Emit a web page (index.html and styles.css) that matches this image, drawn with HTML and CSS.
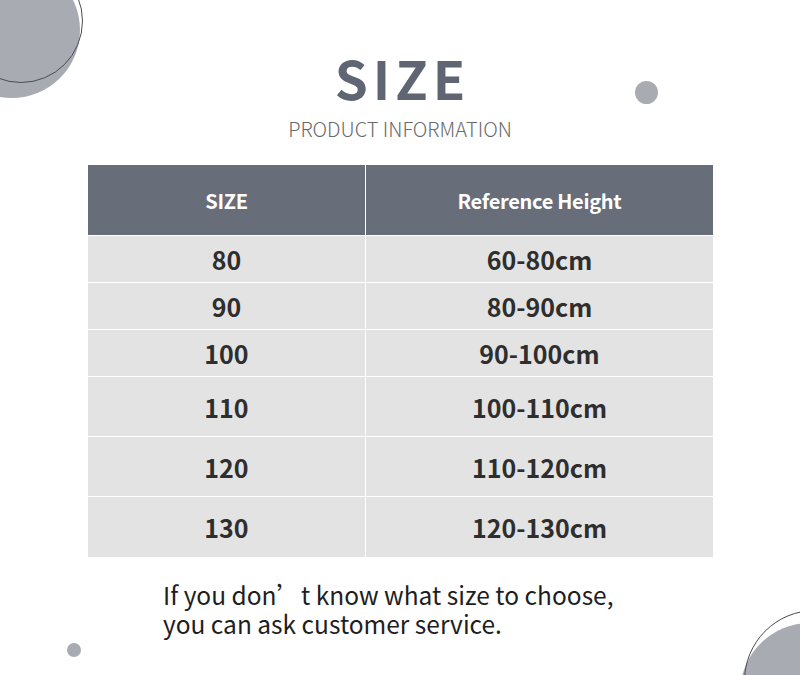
FILE: index.html
```html
<!DOCTYPE html>
<html lang="zh-CN">
<head>
<meta charset="utf-8">
<link rel="stylesheet" href="styles.css">
</head>
<body>
<div class="page">
  <div class="deco deco-tl-fill"></div>
  <div class="deco deco-tl-ring"></div>
  <div class="deco deco-br-fill"></div>
  <div class="deco deco-br-ring"></div>
  <div class="deco dot dot-a"></div>
  <div class="deco dot dot-b"></div>

  <header class="head">
    <h1 class="title">SIZE</h1>
    <p class="subtitle">PRODUCT INFORMATION</p>
  </header>

  <table class="size-table">
    <thead>
      <tr><th class="c1">SIZE</th><th class="c2">Reference Height</th></tr>
    </thead>
    <tbody>
      <tr class="short"><td>80</td><td>60-80cm</td></tr>
      <tr class="short"><td>90</td><td>80-90cm</td></tr>
      <tr class="short"><td>100</td><td>90-100cm</td></tr>
      <tr class="tall"><td>110</td><td>100-110cm</td></tr>
      <tr class="tall"><td>120</td><td>110-120cm</td></tr>
      <tr class="tall last"><td>130</td><td>120-130cm</td></tr>
    </tbody>
  </table>

  <p class="note">If you don’t know what size to choose,<br>you can ask customer service.</p>
</div>
</body>
</html>
```

FILE: styles.css
```css
html, body {
  margin: 0;
  padding: 0;
  background: #ffffff;
}
.page {
  position: relative;
  width: 800px;
  height: 675px;
  overflow: hidden;
  background: #ffffff;
  font-family: "Noto Sans CJK SC", "Noto Sans", sans-serif;
}
.deco {
  position: absolute;
  border-radius: 50%;
}
.deco-tl-fill {
  left: -56px;
  top: -38px;
  width: 136px;
  height: 136px;
  background: #a8acb2;
}
.deco-tl-ring {
  left: -41px;
  top: -41px;
  width: 124px;
  height: 124px;
  border: 1px solid #4a4d55;
  box-sizing: border-box;
}
.deco-br-fill {
  left: 740px;
  top: 623px;
  width: 140px;
  height: 140px;
  background: #a8acb2;
}
.deco-br-ring {
  left: 744px;
  top: 610px;
  width: 142px;
  height: 142px;
  border: 1px solid #4a4d55;
  box-sizing: border-box;
}
.dot { background: #a8acb2; }
.dot-a { left: 635px; top: 81px; width: 23px; height: 23px; }
.dot-b { left: 67px; top: 643px; width: 14px; height: 14px; }

.head {
  padding-top: 46px;
  text-align: center;
}
.title {
  margin: 0;
  font-size: 53px;
  line-height: 62px;
  font-weight: 700;
  letter-spacing: 5px;
  padding-left: 5px;
  color: #5f6572;
}
.subtitle {
  margin: 8px 0 0;
  font-size: 20px;
  line-height: 26px;
  font-weight: 300;
  color: #6a6a6a;
}

.size-table {
  margin: 23px 0 0 88px;
  width: 625px;
  border-collapse: collapse;
  table-layout: fixed;
}
.size-table th,
.size-table td {
  padding: 0;
  text-align: center;
  border: 1px solid #ffffff;
}
.size-table tr > :first-child { border-left: 0; width: 277px; }
.size-table tr > :last-child { border-right: 0; }
.size-table thead th {
  border-top: 0;
  height: 70px;
  background: #676d79;
  color: #ffffff;
  font-size: 20px;
  font-weight: 700;
  letter-spacing: -0.3px;
}
.size-table td {
  background: #e3e3e3;
  color: #2e2e2e;
  font-size: 25px;
  font-weight: 700;
}
.size-table tr.short td { height: 46px; }
.size-table tr.tall td { height: 59px; }
.size-table tr.last td { height: 60px; border-bottom: 0; }

.note {
  margin: 23px 0 0 163px;
  font-size: 24.5px;
  line-height: 29px;
  color: #1e1e1e;
}
```
